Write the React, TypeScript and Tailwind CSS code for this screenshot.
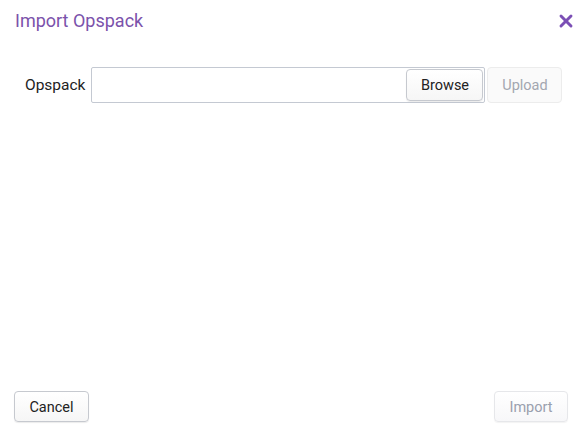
import { X } from 'lucide-react';

export default function App() {
  return (
    <div className="flex h-[436px] w-[587px] flex-col bg-white font-['Roboto',sans-serif] text-[#333]">
      <div className="flex items-center justify-between pl-[15px] pr-[11px] pt-[9px]">
        <h1 className="text-[18px] leading-[24px] text-[#7b52ab]">Import Opspack</h1>
        <button className="mt-[-1px] text-[#7b4fb5]">
          <X size={20} strokeWidth={3.5} />
        </button>
      </div>

      <div className="mt-[34px] flex items-center pl-[25px]">
        <label className="mr-[6px] pt-[2px] text-[15.5px] text-[#222]">Opspack</label>
        <div className="flex h-[36px] w-[394px] items-center justify-end rounded-[2px] border border-[#c4c9d2] pr-[1px]">
          <button className="h-[32px] w-[77px] rounded-[4px] border border-[#c6c9cf] bg-gradient-to-b from-white to-[#f6f6f6] pt-[2px] text-[14.5px] text-[#222] shadow-[0_1px_1px_rgba(0,0,0,0.08)]">
            Browse
          </button>
        </div>
        <button className="ml-[2px] h-[36px] w-[75px] rounded-[4px] border border-[#ececec] bg-[#fafafa] pt-[2px] text-[14.5px] text-[#a3a7b0]">
          Upload
        </button>
      </div>

      <div className="flex-1" />

      <div className="flex items-center justify-between px-[14px] pb-[14px]">
        <button className="h-[31px] w-[75px] rounded-[4px] border border-[#c6c9cf] bg-gradient-to-b from-white to-[#f6f6f6] pt-[2px] text-[14.5px] text-[#222] shadow-[0_1px_1px_rgba(0,0,0,0.08)]">
          Cancel
        </button>
        <button className="mr-[5px] h-[31px] w-[74px] rounded-[4px] border border-[#e6e7ea] bg-gradient-to-b from-white to-[#f7f7f9] pt-[2px] text-[14.5px] text-[#9aa0ae] shadow-[0_1px_1px_rgba(0,0,0,0.05)]">
          Import
        </button>
      </div>
    </div>
  );
}
